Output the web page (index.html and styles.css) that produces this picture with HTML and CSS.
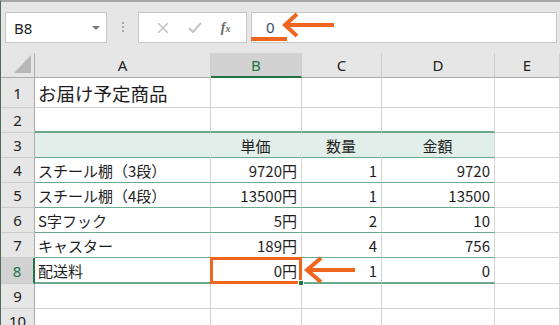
FILE: index.html
```html
<!DOCTYPE html>
<html lang="ja">
<head>
  <meta charset="UTF-8" />
  <title>お届け予定商品</title>
  <link rel="stylesheet" href="styles.css">
</head>
<body>

  <div class="app">

    <div class="formula-bar">
      <div class="name-box">
        <span>B8</span>
        <span class="caret"></span>
      </div>
      <div class="grip"><i></i><i></i><i></i></div>
      <div class="fx-buttons">
        <svg width="12" height="12" viewBox="0 0 12 12"><path d="M1 1L11 11M11 1L1 11" stroke="#c4c4c4" stroke-width="1.6" fill="none"/></svg>
        <svg width="14" height="12" viewBox="0 0 14 12"><path d="M1 6L5 10L13 1" stroke="#c4c4c4" stroke-width="2" fill="none"/></svg>
        <span class="fx">f<small>x</small></span>
      </div>
      <div class="formula-input">
        <span class="value">0</span>
        <span class="mark"></span>
      </div>
    </div>

    <div class="sheet">
      <!-- header row -->
      <div class="corner"><svg width="34" height="25"><polygon points="30,2 30,20 13,20" fill="#b8b8b8"/></svg></div>
      <div class="col-head">A</div>
      <div class="col-head active">B</div>
      <div class="col-head">C</div>
      <div class="col-head">D</div>
      <div class="col-head">E</div>

      <!-- 1 -->
      <div class="row-head">1</div>
      <div class="cell title">お届け予定商品</div>
      <div class="cell"></div>
      <div class="cell"></div>
      <div class="cell"></div>
      <div class="cell"></div>

      <!-- 2 -->
      <div class="row-head">2</div>
      <div class="cell t-top"></div>
      <div class="cell t-top"></div>
      <div class="cell t-top"></div>
      <div class="cell t-top"></div>
      <div class="cell"></div>

      <!-- 3 -->
      <div class="row-head">3</div>
      <div class="cell t th"></div>
      <div class="cell t th center">単価</div>
      <div class="cell t th center">数量</div>
      <div class="cell t th center last">金額</div>
      <div class="cell"></div>

      <!-- 4 -->
      <div class="row-head">4</div>
      <div class="cell t">スチール棚（3段）</div>
      <div class="cell t num">9720円</div>
      <div class="cell t num">1</div>
      <div class="cell t num">9720</div>
      <div class="cell"></div>

      <!-- 5 -->
      <div class="row-head">5</div>
      <div class="cell t">スチール棚（4段）</div>
      <div class="cell t num">13500円</div>
      <div class="cell t num">1</div>
      <div class="cell t num">13500</div>
      <div class="cell"></div>

      <!-- 6 -->
      <div class="row-head">6</div>
      <div class="cell t">S字フック</div>
      <div class="cell t num">5円</div>
      <div class="cell t num">2</div>
      <div class="cell t num">10</div>
      <div class="cell"></div>

      <!-- 7 -->
      <div class="row-head">7</div>
      <div class="cell t">キャスター</div>
      <div class="cell t num">189円</div>
      <div class="cell t num">4</div>
      <div class="cell t num">756</div>
      <div class="cell"></div>

      <!-- 8 -->
      <div class="row-head active">8</div>
      <div class="cell t t-bottom">配送料</div>
      <div class="cell t t-bottom num selected">0円<span class="sel"><span class="handle"></span></span></div>
      <div class="cell t t-bottom num">1</div>
      <div class="cell t t-bottom num">0</div>
      <div class="cell"></div>

      <!-- 9 -->
      <div class="row-head">9</div>
      <div class="cell"></div>
      <div class="cell"></div>
      <div class="cell"></div>
      <div class="cell"></div>
      <div class="cell"></div>

      <!-- 10 -->
      <div class="row-head">10</div>
      <div class="cell"></div>
      <div class="cell"></div>
      <div class="cell"></div>
      <div class="cell"></div>
      <div class="cell"></div>
    </div>

    <!-- 注釈の矢印 -->
    <svg class="arrow arrow-top" width="56" height="28" viewBox="0 0 56 28">
      <path d="M4 13H53" stroke="#f0651f" stroke-width="4"/>
      <path d="M16 2L4 13L16 24" stroke="#f0651f" stroke-width="4" fill="none"/>
    </svg>
    <svg class="arrow arrow-cell" width="56" height="30" viewBox="0 0 56 30">
      <path d="M4 14H52" stroke="#f0651f" stroke-width="4"/>
      <path d="M18 2L4 14L18 26" stroke="#f0651f" stroke-width="4" fill="none"/>
    </svg>

  </div>

</body>
</html>
```

FILE: styles.css
```css
* {
  box-sizing: border-box;
  margin: 0;
  padding: 0;
}

body {
  background: #fff;
}

.app {
  position: relative;
  width: 560px;
  height: 325px;
  overflow: hidden;
  background-color: #e6e6e6;
  border-top: 2px solid #a6a6a6;
  border-left: 1px solid #4f6a5c;
  font-family: "Noto Sans CJK JP", sans-serif;
  color: #1e1e1e;
}

/* formula bar */

.formula-bar {
  display: flex;
  align-items: flex-start;
  height: 51px;
  padding-top: 10px;
  padding-left: 4px;
}

.name-box {
  display: flex;
  align-items: center;
  justify-content: space-between;
  width: 102px;
  height: 31px;
  padding: 0 6px 0 8px;
  background-color: #fff;
  border: 1px solid #c6c6c6;
  font-family: "Noto Sans", sans-serif;
  font-size: 15px;
}

.caret {
  width: 0;
  height: 0;
  border-left: 4px solid transparent;
  border-right: 4px solid transparent;
  border-top: 4px solid #7a7a7a;
}

.grip {
  display: flex;
  flex-direction: column;
  align-items: center;
  gap: 2px;
  width: 31px;
  padding-top: 10px;
}

.grip i {
  width: 2px;
  height: 2px;
  background-color: #a8a8a8;
}

.fx-buttons {
  display: flex;
  align-items: center;
  justify-content: space-around;
  width: 109px;
  height: 31px;
  padding: 0 6px 0 8px;
  background-color: #fff;
  border: 1px solid #c6c6c6;
}

.fx {
  font-family: "Liberation Serif", serif;
  font-style: italic;
  font-weight: bold;
  font-size: 14px;
  color: #6a6a6a;
}

.fx small {
  font-size: 10px;
}

.formula-input {
  position: relative;
  width: 306px;
  height: 31px;
  margin-left: 4px;
  padding-left: 14px;
  background-color: #fff;
  border: 1px solid #c6c6c6;
  font-family: "Noto Sans", sans-serif;
  font-size: 15px;
  line-height: 29px;
  color: #3b4a6a;
}

.mark {
  position: absolute;
  left: -1px;
  bottom: 1px;
  width: 36px;
  height: 4px;
  background-color: #f0651f;
}

/* sheet grid */

.sheet {
  display: grid;
  grid-template-columns: 34px 176px 91px 80px 113px 1fr;
  grid-template-rows: 25px 30px 25px 25px 25px 25px 25px 25px 26px 25px 25px;
  background-color: #fff;
}

.corner {
  background-color: #e6e6e6;
  border-right: 1px solid #ababab;
  border-bottom: 1px solid #ababab;
}

.col-head {
  display: flex;
  align-items: center;
  justify-content: center;
  background-color: #e6e6e6;
  border-right: 1px solid #cdcdcd;
  border-bottom: 1px solid #ababab;
  font-family: "Noto Sans", sans-serif;
  font-size: 15px;
  color: #222;
}

.col-head.active {
  background-color: #d2d2d2;
  border-bottom: 2px solid #217346;
  color: #217346;
}

.row-head {
  display: flex;
  align-items: center;
  justify-content: center;
  background-color: #e6e6e6;
  border-right: 1px solid #ababab;
  border-bottom: 1px solid #cdcdcd;
  font-family: "Noto Sans", sans-serif;
  font-size: 15px;
  color: #222;
}

.row-head.active {
  background-color: #d2d2d2;
  border-right: 2px solid #217346;
  color: #217346;
}

.cell {
  display: flex;
  align-items: center;
  padding: 0 4px 0 3px;
  border-right: 1px solid #d4d4d4;
  border-bottom: 1px solid #d4d4d4;
  font-size: 15px;
  white-space: nowrap;
}

.title {
  font-size: 18.5px;
  overflow: visible;
}

.t {
  border-bottom-color: #6aa98b;
}

.t-top {
  border-bottom: 2px solid #6aa98b;
}

.t-bottom {
  border-bottom: 2px solid #6aa98b;
}

.th {
  background-color: #e2eee9;
  border-right-color: #e2eee9;
}

.th.last {
  border-right-color: #d4d4d4;
}

.center {
  justify-content: center;
}

.num {
  justify-content: flex-end;
}

.selected {
  position: relative;
}

.sel {
  position: absolute;
  top: -1px;
  left: -1px;
  right: -1px;
  bottom: -2px;
  border: 3px solid #f0651f;
}

.handle {
  position: absolute;
  right: -5px;
  bottom: -5px;
  width: 6px;
  height: 6px;
  background-color: #217346;
  border: 1px solid #fff;
}

/* annotation arrows */

.arrow {
  position: absolute;
}

.arrow-top {
  left: 280px;
  top: 10px;
}

.arrow-cell {
  left: 302px;
  top: 254px;
}
```
